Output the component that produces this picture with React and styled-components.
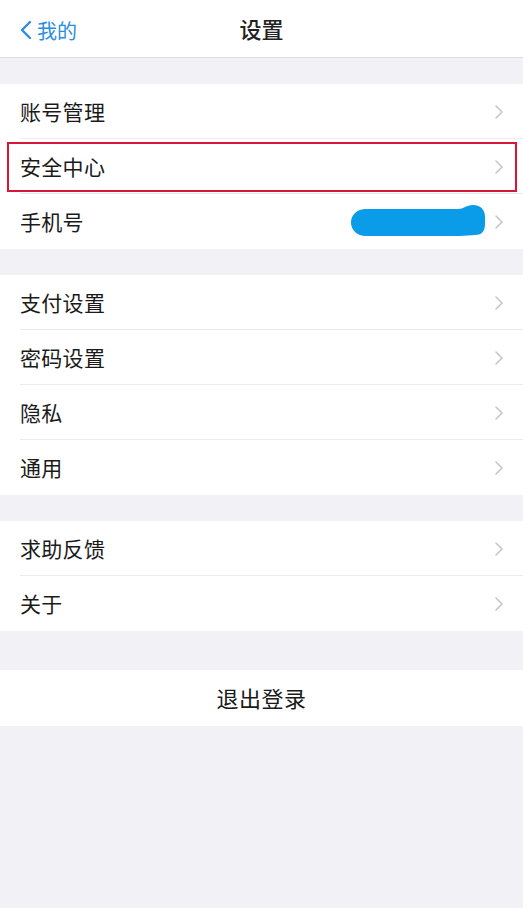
import React from "react";
import styled, { createGlobalStyle } from "styled-components";

const Global = createGlobalStyle`
  html, body { margin: 0; padding: 0; background: #f2f2f6; }
  body { font-family: "Noto Sans CJK SC", "Noto Sans", sans-serif; }
`;

const Page = styled.div`
  width: 523px;
  min-height: 908px;
  background: #f2f2f6;
  display: flex;
  flex-direction: column;
`;

const NavBar = styled.div`
  height: 58px;
  background: #fff;
  border-bottom: 1px solid #dcdce0;
  box-sizing: border-box;
  display: grid;
  grid-template-columns: 1fr auto 1fr;
  align-items: center;
  padding: 0 18px;
`;

const Back = styled.div`
  display: flex;
  align-items: center;
  gap: 5px;
  color: #2a8de0;
  font-size: 20px;
  margin-top: 3px;
  padding-left: 2px;
`;

const Title = styled.div`
  font-size: 22px;
  font-weight: 500;
  color: #222;
  margin-top: -2px;
`;

const Group = styled.div`
  background: #fff;
  margin-top: ${(p) => p.$gap}px;
`;

const Row = styled.div`
  position: relative;
  height: 55px;
  display: flex;
  align-items: center;
  padding-left: 20px;
  box-sizing: border-box;
  &:not(:last-child)::after {
    content: "";
    position: absolute;
    left: 20px;
    right: 0;
    bottom: 0;
    height: 1px;
    background: #ececef;
  }
`;

const Label = styled.div`
  flex: 1;
  font-size: 21px;
  color: #1a1a1a;
  letter-spacing: 0.3px;
  margin-top: -2px;
`;

const Trail = styled.div`
  display: flex;
  align-items: center;
  gap: 8px;
  padding-right: 20px;
`;

const Highlight = styled.div`
  position: absolute;
  left: 7px;
  right: 6px;
  top: 3px;
  bottom: 2px;
  border: 2.5px solid #d8163a;
  pointer-events: none;
`;

const Logout = styled.div`
  margin-top: 39px;
  height: 56px;
  background: #fff;
  display: flex;
  align-items: center;
  justify-content: center;
  font-size: 22px;
  color: #1a1a1a;
  letter-spacing: 0.5px;
  padding-bottom: 2px;
  box-sizing: border-box;
`;

const Chevron = () => (
  <svg width="8" height="14" viewBox="0 0 8 14">
    <path d="M1 1 L7 7 L1 13" fill="none" stroke="#c6c6ca" strokeWidth="1.6" strokeLinecap="round" strokeLinejoin="round" />
  </svg>
);

const Blob = () => (
  <svg width="137" height="35" viewBox="0 0 137 35">
    <path
      d="M16 5 H108 C114 5 116 1 123 1 C131 1 135 6 135 13 V20 C135 28 131 31 125 31 L110 32 H16 C7 32 1 26 1 18.5 C1 11 7 5 16 5 Z"
      fill="#0a9be9"
    />
  </svg>
);

const BackIcon = () => (
  <svg width="12" height="20" viewBox="0 0 12 20">
    <path d="M10 2 L2 10 L10 18" fill="none" stroke="#2a8de0" strokeWidth="2.4" strokeLinecap="round" strokeLinejoin="round" />
  </svg>
);

const Item = ({ label, children, highlight }) => (
  <Row>
    <Label>{label}</Label>
    <Trail>
      {children}
      <Chevron />
    </Trail>
    {highlight && <Highlight />}
  </Row>
);

export default function App() {
  return (
    <Page>
      <Global />
      <NavBar>
        <Back>
          <BackIcon />
          <span>我的</span>
        </Back>
        <Title>设置</Title>
        <div />
      </NavBar>
      <Group $gap={26}>
        <Item label="账号管理" />
        <Item label="安全中心" highlight />
        <Item label="手机号">
          <Blob />
        </Item>
      </Group>
      <Group $gap={26}>
        <Item label="支付设置" />
        <Item label="密码设置" />
        <Item label="隐私" />
        <Item label="通用" />
      </Group>
      <Group $gap={26}>
        <Item label="求助反馈" />
        <Item label="关于" />
      </Group>
      <Logout>退出登录</Logout>
    </Page>
  );
}
